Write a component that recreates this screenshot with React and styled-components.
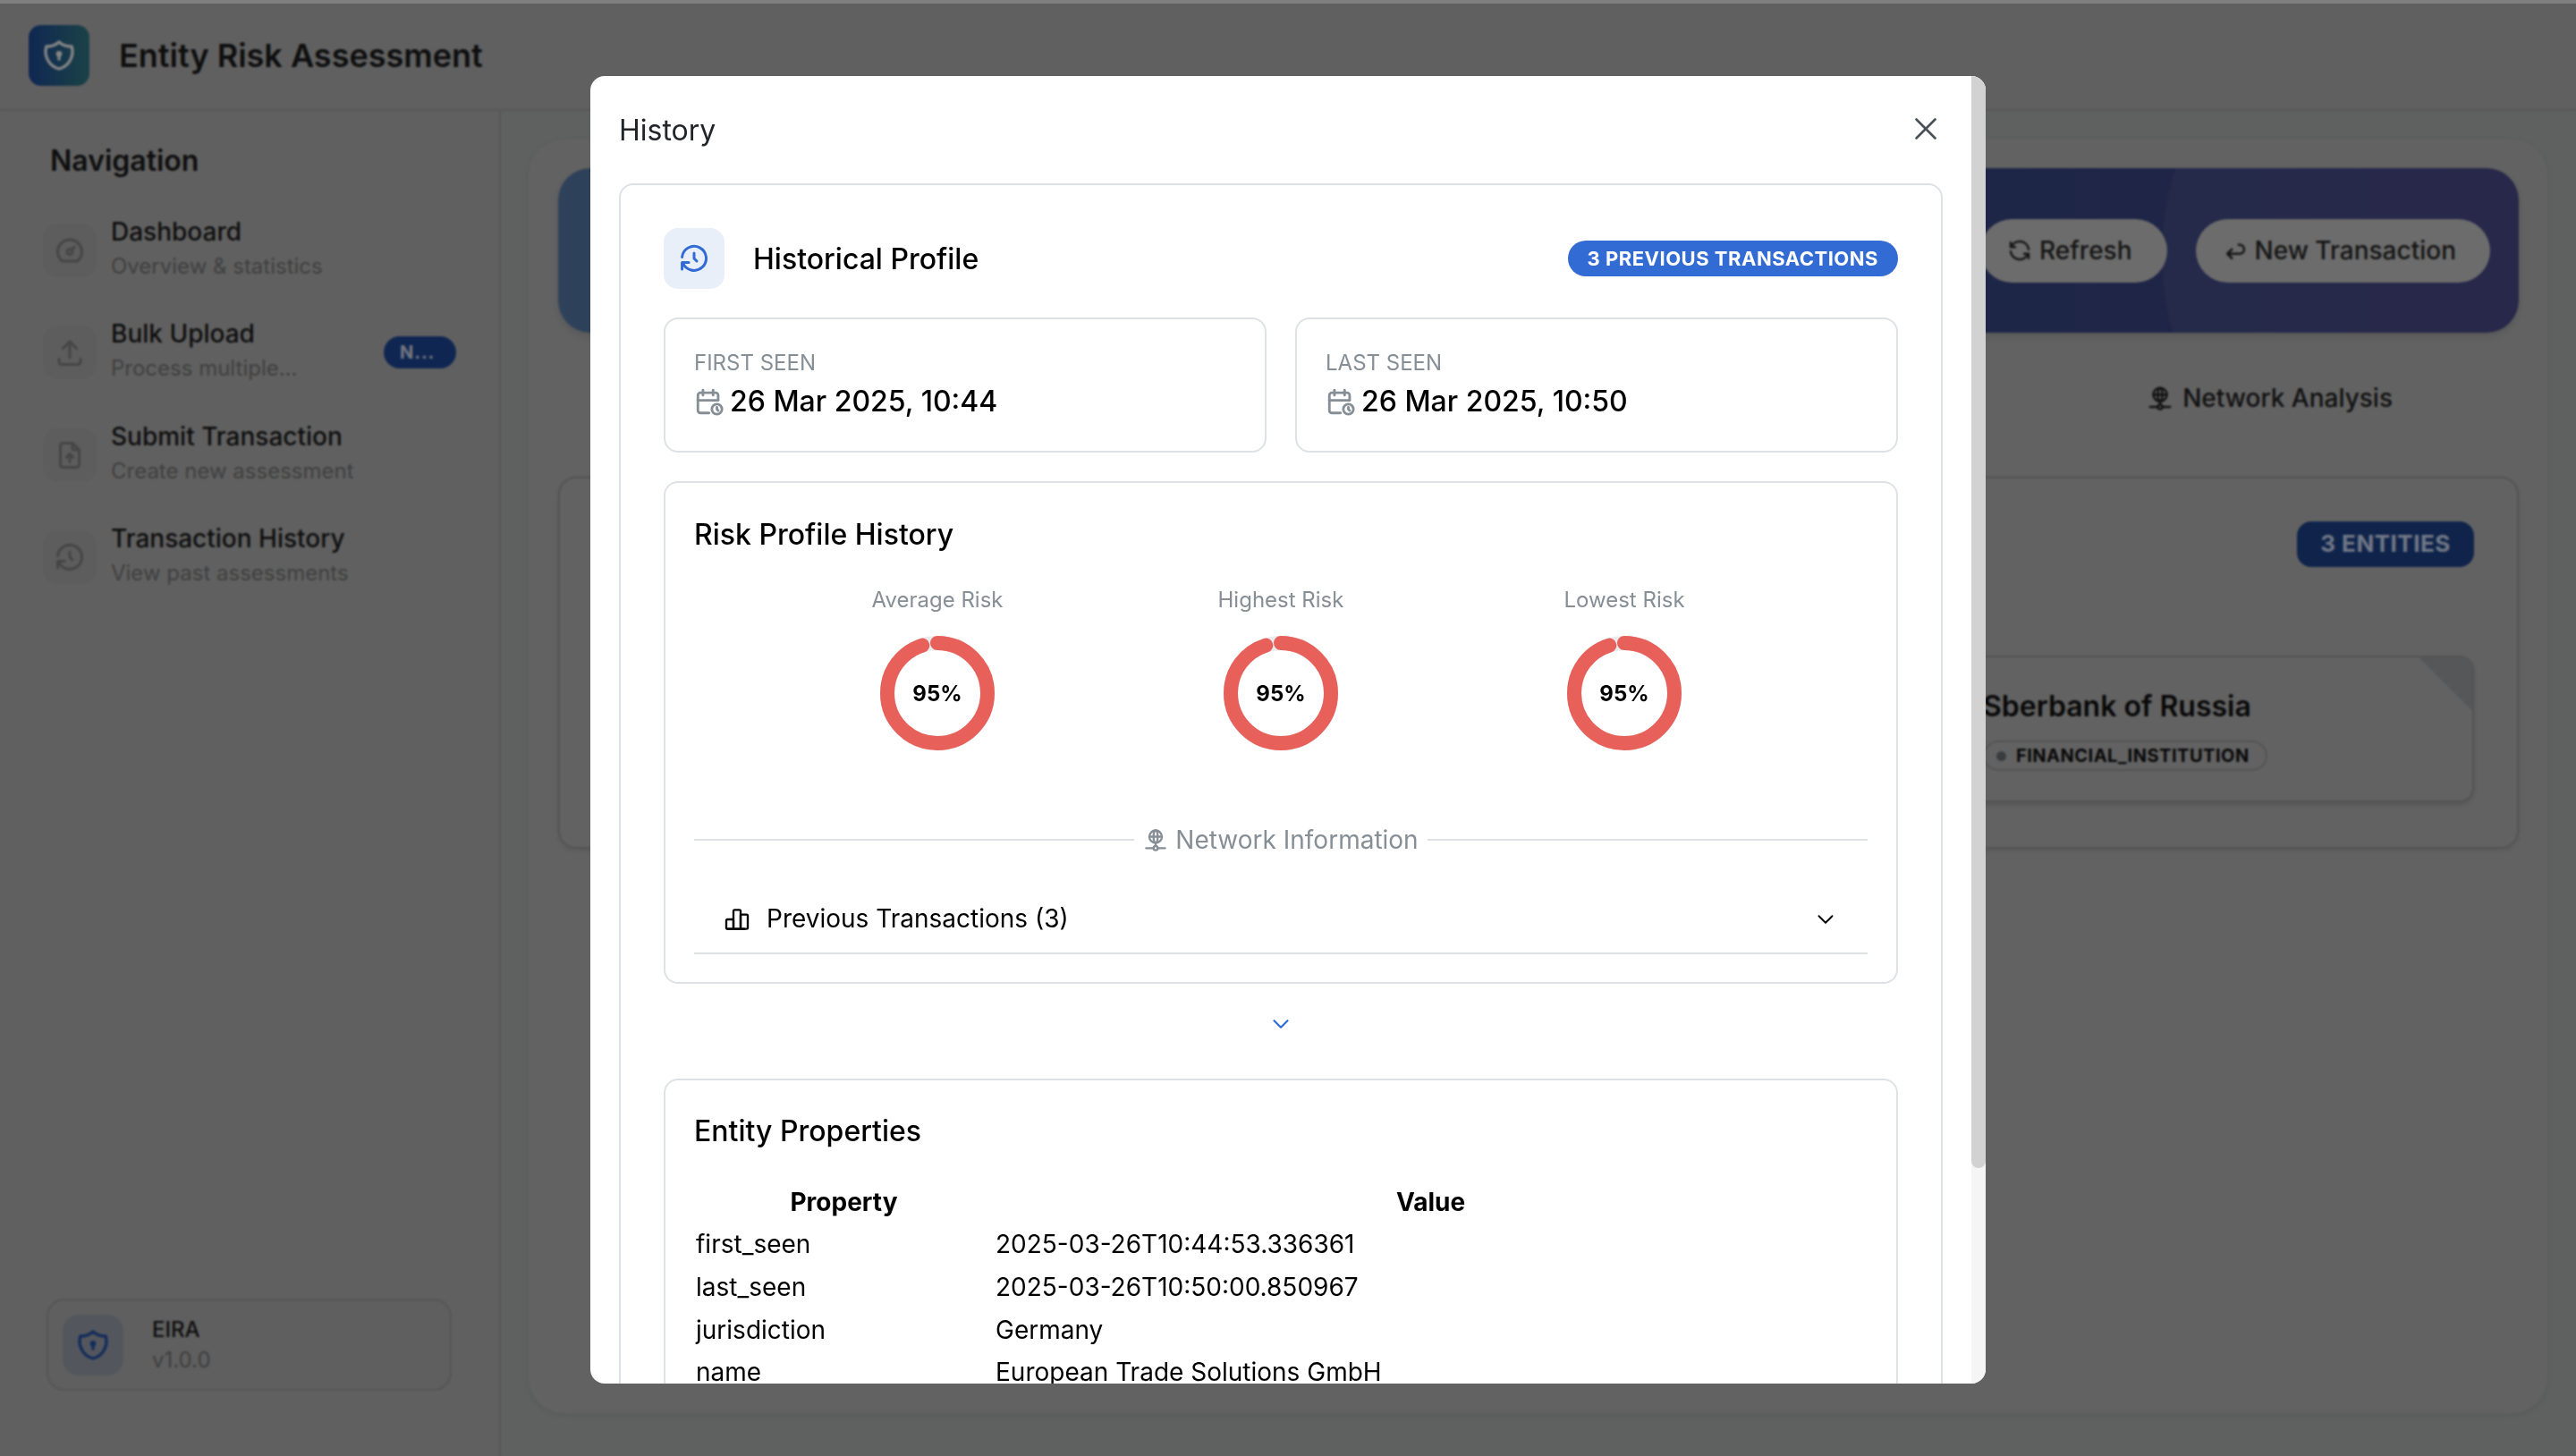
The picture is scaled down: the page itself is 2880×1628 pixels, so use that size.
import React from 'react';
import styled, { createGlobalStyle } from 'styled-components';
import {
  TbDashboard, TbUpload, TbFileUpload, TbHistory, TbShieldLock, TbCalendarTime,
  TbRefresh, TbArrowBack, TbNetwork, TbChartBar, TbChevronDown, TbX,
} from 'react-icons/tb';

const Global = createGlobalStyle`
  html, body { margin: 0; padding: 0; background: #b9b9b9; }
  * { box-sizing: border-box; }
  body { font-family: Inter, "Liberation Sans", sans-serif; color: #000; }
`;

const Page = styled.div`
  position: relative;
  width: 2880px;
  height: 1628px;
  overflow: hidden;
  display: flex;
  flex-direction: column;
  background: #b9b9b9;
  border-top: 4px solid #7f7f7f;
`;

const Header = styled.header`
  height: 120px;
  flex: none;
  display: flex;
  align-items: center;
  gap: 33px;
  padding: 0 32px 2px;
  border-bottom: 2px solid #a7a7a7;
`;

const Logo = styled.div`
  width: 68px;
  height: 68px;
  border-radius: 14px;
  display: flex;
  align-items: center;
  justify-content: center;
  color: #fff;
  background: linear-gradient(90deg, #1f4c9e, #347f88);
`;

const AppTitle = styled.h1`
  margin: 0;
  font-size: 36px;
  font-weight: 600;
  color: #1c1c1c;
`;

const Body = styled.div`
  flex: 1;
  display: flex;
  min-height: 0;
`;

const Sidebar = styled.aside`
  width: 560px;
  flex: none;
  display: flex;
  flex-direction: column;
  padding: 32px 48px 73px;
  border-right: 2px solid #a7a7a7;
`;

const NavHeading = styled.h2`
  margin: 0 0 46px 8px;
  font-size: 32px;
  line-height: 48px;
  font-weight: 600;
  color: #1c1c1c;
`;

const NavList = styled.nav`
  display: flex;
  flex-direction: column;
  gap: 54.3px;
  width: 462px;
`;

const NavItem = styled.div`
  display: flex;
  align-items: center;
  gap: 16px;
  height: 60px;
`;

const NavIcon = styled.div`
  width: 60px;
  height: 60px;
  flex: none;
  border-radius: 16px;
  background: #b2b2b2;
  color: #858585;
  display: flex;
  align-items: center;
  justify-content: center;
`;

const NavText = styled.div`
  display: flex;
  flex-direction: column;
  gap: 2px;
  min-width: 0;
  padding-bottom: 4px;
`;

const NavTitle = styled.span`
  font-size: 28px;
  line-height: 38px;
  font-weight: 500;
  color: #1c1c1c;
`;

const NavSub = styled.span`
  font-size: 24px;
  line-height: 36px;
  color: #7a7a7a;
`;

const NavBadge = styled.span`
  margin-left: auto;
  width: 81px;
  height: 36px;
  flex: none;
  border-radius: 18px;
  background: #204a9e;
  color: #dfe6f5;
  font-size: 20px;
  font-weight: 700;
  letter-spacing: 1px;
  line-height: 36px;
  padding-left: 18px;
`;

const SideFooter = styled.div`
  margin: auto 0 0 4px;
  width: 453px;
  height: 103px;
  display: flex;
  align-items: center;
  gap: 32px;
  padding-left: 16px;
  border: 2px solid #a3a3a3;
  border-radius: 20px;
  background: #b6b6b6;
`;

const FooterIcon = styled.div`
  width: 68px;
  height: 68px;
  border-radius: 18px;
  background: #a0a7b2;
  color: #2552ad;
  display: flex;
  align-items: center;
  justify-content: center;
`;

const FooterText = styled.div`
  display: flex;
  flex-direction: column;
  gap: 2px;
`;

const FooterName = styled.span`
  font-size: 24px;
  line-height: 32px;
  font-weight: 500;
  color: #1c1c1c;
`;

const FooterVersion = styled.span`
  font-size: 24px;
  line-height: 32px;
  color: #7a7a7a;
`;

const Main = styled.main`
  flex: 1;
  min-width: 0;
  padding: 32px 32px 48px 31px;
  background: #b6bbb9;
`;

const Panel = styled.div`
  height: 100%;
  padding: 32px 32px 0 33px;
  border-radius: 40px;
  background: #bdbdbd;
  box-shadow: 0 2px 8px rgba(0, 0, 0, 0.08);
`;

const Banner = styled.section`
  position: relative;
  height: 184px;
  display: flex;
  align-items: center;
  justify-content: flex-end;
  gap: 32px;
  padding-right: 32px;
  border-radius: 36px;
  overflow: hidden;
  background: linear-gradient(90deg, #5a7fae 0%, #3a4a88 73%, #45448a 100%);
  box-shadow: 0 4px 10px rgba(0, 0, 0, 0.12);
`;

const BannerCircle = styled.div`
  position: absolute;
  right: -219px;
  top: -212px;
  width: 618px;
  height: 618px;
  border-radius: 50%;
  background: rgba(255, 255, 255, 0.05);
`;

const BannerButton = styled.button`
  position: relative;
  height: 71px;
  display: flex;
  align-items: center;
  gap: 7px;
  padding: 0 ${(p) => p.$pad}px 0 29px;
  border: 0;
  border-radius: 36px;
  background: #cfcfcf;
  color: #2a2a2a;
  font: 500 28px Inter, sans-serif;
`;

const TabRow = styled.div`
  height: 81px;
  margin: 32px 0 48px;
  display: flex;
  justify-content: flex-end;
  align-items: center;
  padding-right: 141px;
`;

const Tab = styled.div`
  display: flex;
  align-items: center;
  gap: 10px;
  font-size: 28px;
  font-weight: 500;
  color: #222;
`;

const EntitiesCard = styled.section`
  height: 416px;
  padding: 48px 48px 0;
  border: 2px solid #a0a0a0;
  border-radius: 20px;
  box-shadow: 0 2px 6px rgba(0, 0, 0, 0.1);
`;

const EntitiesTop = styled.div`
  display: flex;
  justify-content: flex-end;
  margin-bottom: 99px;
`;

const EntitiesBadge = styled.span`
  width: 198px;
  height: 51px;
  border-radius: 16px;
  background: #1f4590;
  color: #d8e4ff;
  font-size: 26px;
  font-weight: 700;
  letter-spacing: 0.5px;
  line-height: 50px;
  text-align: center;
`;

const TileRow = styled.div`
  display: flex;
  justify-content: flex-end;
`;

const Tile = styled.article`
  position: relative;
  width: 675px;
  height: 164px;
  padding: 33px 0 0 124px;
  border: 2px solid #a0a0a0;
  border-radius: 16px;
  overflow: hidden;
  box-shadow: 0 3px 5px rgba(0, 0, 0, 0.14);
`;

const TileCorner = styled.div`
  position: absolute;
  top: 0;
  right: 0;
  width: 60px;
  height: 60px;
  background: #a4a7ab;
  clip-path: polygon(0 0, 100% 0, 100% 100%);
`;

const TileName = styled.h3`
  margin: 0 0 16px;
  font-size: 32px;
  line-height: 44px;
  font-weight: 600;
  color: #111;
`;

const Pill = styled.span`
  display: inline-flex;
  align-items: center;
  gap: 11px;
  height: 34px;
  padding: 0 18px 0 13px;
  border: 2px solid #a0a0a0;
  border-radius: 17px;
  font-size: 20px;
  letter-spacing: 0.5px;
  font-weight: 700;
  color: #111;
`;

const PillDot = styled.i`
  width: 11px;
  height: 11px;
  border-radius: 50%;
  background: #6f7479;
`;

const Overlay = styled.div`
  position: absolute;
  inset: -4px 0 0 0;
  display: flex;
  justify-content: center;
  align-items: flex-start;
  padding-top: 85px;
  background: rgba(0, 0, 0, 0.48);
  backdrop-filter: blur(1px);
`;

const Modal = styled.div`
  position: relative;
  width: 1560px;
  height: 1462px;
  padding-right: 16px;
  border-radius: 16px;
  background: #fff;
  overflow: hidden;
`;

const ScrollTrack = styled.div`
  position: absolute;
  top: 0;
  right: 0;
  bottom: 0;
  width: 16px;
  background: #f5f5f5;
`;

const ScrollThumb = styled.div`
  height: 1221px;
  border-radius: 0 0 8px 8px;
  background: #d2d2d2;
`;

const ModalHead = styled.div`
  height: 120px;
  display: flex;
  align-items: center;
  justify-content: space-between;
  padding: 0 30px 0 32px;
  color: #000;
`;

const ModalTitle = styled.h2`
  margin: 0;
  font-size: 32px;
  font-weight: 400;
  color: #212529;
`;

const CloseButton = styled.span`
  display: flex;
  color: #495057;
  margin-top: -2px;
`;

const ModalBody = styled.div`
  padding: 0 32px;
`;

const OuterCard = styled.div`
  padding: 48px 48px;
  border: 2px solid #dee2e6;
  border-radius: 16px;
`;

const ProfileHead = styled.div`
  display: flex;
  align-items: center;
  justify-content: space-between;
  height: 68px;
  margin-bottom: 32px;
`;

const ProfileTitleGroup = styled.div`
  display: flex;
  align-items: center;
  gap: 32px;
`;

const ProfileIcon = styled.div`
  width: 68px;
  height: 68px;
  border-radius: 16px;
  background: #e8eff9;
  color: #326bd4;
  display: flex;
  align-items: center;
  justify-content: center;
`;

const ProfileTitle = styled.h3`
  margin: 0;
  font-size: 32px;
  font-weight: 500;
`;

const CountBadge = styled.span`
  height: 40px;
  padding: 0 22px;
  border-radius: 20px;
  background: #326bd4;
  color: #fff;
  font-size: 22px;
  font-weight: 700;
  line-height: 40px;
  letter-spacing: 0.5px;
`;

const StatGrid = styled.div`
  display: grid;
  grid-template-columns: 1fr 1fr;
  gap: 32px;
  margin-bottom: 32px;
`;

const BorderCard = styled.div`
  border: 2px solid #dee2e6;
  border-radius: 16px;
`;

const StatCard = styled(BorderCard)`
  height: 151px;
  padding: 31px 32px;
`;

const StatLabel = styled.div`
  font-size: 24px;
  line-height: 36px;
  color: #868e96;
  margin-bottom: 2px;
`;

const StatValue = styled.div`
  display: flex;
  align-items: center;
  gap: 6px;
  font-size: 32px;
  line-height: 46px;
  font-weight: 500;
  svg {
    color: #868e96;
  }
`;

const RiskCard = styled(BorderCard)`
  height: 562px;
  padding: 35px 32px 0;
`;

const CardHeading = styled.h3`
  margin: 0;
  font-size: 32px;
  line-height: 46px;
  font-weight: 500;
`;

const RingGrid = styled.div`
  display: grid;
  grid-template-columns: repeat(3, 384px);
  justify-content: center;
  margin-top: 30px;
`;

const RingCol = styled.div`
  display: flex;
  flex-direction: column;
  align-items: center;
`;

const RingLabel = styled.div`
  font-size: 24px;
  line-height: 40px;
  color: #868e96;
  margin-bottom: 20px;
`;

const RingBox = styled.div`
  display: grid;
  width: 128px;
  height: 128px;
  place-items: center;
  > * {
    grid-area: 1 / 1;
  }
`;

const RingValue = styled.span`
  font-size: 24px;
  font-weight: 700;
`;

const Divider = styled.div`
  display: flex;
  align-items: center;
  gap: 10px;
  margin-top: 78px;
  height: 44px;
  font-size: 28px;
  color: #868e96;
  &::before,
  &::after {
    content: '';
    flex: 1;
    height: 2px;
    background: #dee2e6;
  }
`;

const DividerLabel = styled.span`
  display: flex;
  align-items: center;
  gap: 8px;
`;

const Accordion = styled.div`
  height: 106px;
  display: flex;
  align-items: center;
  justify-content: space-between;
  padding: 28px 32px 0 32px;
  border-bottom: 2px solid #dee2e6;
  font-size: 28px;
  svg:last-child {
    margin-top: 2px;
  }
`;

const AccordionLabel = styled.span`
  display: flex;
  align-items: center;
  gap: 17px;
`;

const Chevron = styled.div`
  display: flex;
  justify-content: center;
  align-items: center;
  height: 106px;
  padding-bottom: 16px;
  color: #326bd4;
`;

const PropsCard = styled(BorderCard)`
  padding: 34px 32px 32px;
`;

const PropTable = styled.table`
  width: 100%;
  margin-top: 32px;
  border-collapse: collapse;
  font-size: 28px;
  table-layout: fixed;
  th {
    font-weight: 700;
    height: 47.6px;
    text-align: center;
    padding: 0;
  }
  td {
    height: 47.6px;
    padding: 0 2px;
  }
  th:first-child {
    width: 335px;
  }
`;

const IS = 36;

const Ring = () => (
  <RingBox>
    <svg width="128" height="128" viewBox="0 0 128 128">
      <circle cx="64" cy="64" r="56" fill="none" stroke="#e9ecef" strokeWidth="16" />
      <circle
        cx="64" cy="64" r="56" fill="none" stroke="#e8605a" strokeWidth="16"
        strokeLinecap="round" strokeDasharray="334.3 351.9" transform="rotate(-90 64 64)"
      />
    </svg>
    <RingValue>95%</RingValue>
  </RingBox>
);

const nav = [
  { I: TbDashboard, t: 'Dashboard', s: 'Overview & statistics' },
  { I: TbUpload, t: 'Bulk Upload', s: 'Process multiple...', badge: 'N...' },
  { I: TbFileUpload, t: 'Submit Transaction', s: 'Create new assessment' },
  { I: TbHistory, t: 'Transaction History', s: 'View past assessments' },
];

const rows = [
  ['first_seen', '2025-03-26T10:44:53.336361'],
  ['last_seen', '2025-03-26T10:50:00.850967'],
  ['jurisdiction', 'Germany'],
  ['name', 'European Trade Solutions GmbH'],
];

export default function App() {
  return (
    <Page>
      <Global />
      <Header>
        <Logo><TbShieldLock size={40} /></Logo>
        <AppTitle>Entity Risk Assessment</AppTitle>
      </Header>
      <Body>
        <Sidebar>
          <NavHeading>Navigation</NavHeading>
          <NavList>
            {nav.map(({ I, t, s, badge }) => (
              <NavItem key={t}>
                <NavIcon><I size={IS} /></NavIcon>
                <NavText>
                  <NavTitle>{t}</NavTitle>
                  <NavSub>{s}</NavSub>
                </NavText>
                {badge && <NavBadge>{badge}</NavBadge>}
              </NavItem>
            ))}
          </NavList>
          <SideFooter>
            <FooterIcon><TbShieldLock size={40} /></FooterIcon>
            <FooterText>
              <FooterName>EIRA</FooterName>
              <FooterVersion>v1.0.0</FooterVersion>
            </FooterText>
          </SideFooter>
        </Sidebar>
        <Main>
          <Panel>
            <Banner>
              <BannerCircle />
              <BannerButton $pad={39}><TbRefresh size={30} />Refresh</BannerButton>
              <BannerButton $pad={38}><TbArrowBack size={30} />New Transaction</BannerButton>
            </Banner>
            <TabRow>
              <Tab><TbNetwork size={30} />Network Analysis</Tab>
            </TabRow>
            <EntitiesCard>
              <EntitiesTop><EntitiesBadge>3 ENTITIES</EntitiesBadge></EntitiesTop>
              <TileRow>
                <Tile>
                  <TileCorner />
                  <TileName>Sberbank of Russia</TileName>
                  <Pill><PillDot />FINANCIAL_INSTITUTION</Pill>
                </Tile>
              </TileRow>
            </EntitiesCard>
          </Panel>
        </Main>
      </Body>
      <Overlay>
        <Modal>
          <ModalHead>
            <ModalTitle>History</ModalTitle>
            <CloseButton><TbX size={42} strokeWidth={1.5} /></CloseButton>
          </ModalHead>
          <ModalBody>
            <OuterCard>
              <ProfileHead>
                <ProfileTitleGroup>
                  <ProfileIcon><TbHistory size={36} /></ProfileIcon>
                  <ProfileTitle>Historical Profile</ProfileTitle>
                </ProfileTitleGroup>
                <CountBadge>3 PREVIOUS TRANSACTIONS</CountBadge>
              </ProfileHead>
              <StatGrid>
                <StatCard>
                  <StatLabel>FIRST SEEN</StatLabel>
                  <StatValue><TbCalendarTime size={34} />26 Mar 2025, 10:44</StatValue>
                </StatCard>
                <StatCard>
                  <StatLabel>LAST SEEN</StatLabel>
                  <StatValue><TbCalendarTime size={34} />26 Mar 2025, 10:50</StatValue>
                </StatCard>
              </StatGrid>
              <RiskCard>
                <CardHeading>Risk Profile History</CardHeading>
                <RingGrid>
                  {['Average Risk', 'Highest Risk', 'Lowest Risk'].map((l) => (
                    <RingCol key={l}>
                      <RingLabel>{l}</RingLabel>
                      <Ring />
                    </RingCol>
                  ))}
                </RingGrid>
                <Divider>
                  <DividerLabel><TbNetwork size={28} />Network Information</DividerLabel>
                </Divider>
                <Accordion>
                  <AccordionLabel><TbChartBar size={32} strokeWidth={1.75} />Previous Transactions (3)</AccordionLabel>
                  <TbChevronDown size={30} strokeWidth={1.5} />
                </Accordion>
              </RiskCard>
              <Chevron><TbChevronDown size={30} strokeWidth={1.75} /></Chevron>
              <PropsCard>
                <CardHeading>Entity Properties</CardHeading>
                <PropTable>
                  <thead>
                    <tr><th>Property</th><th>Value</th></tr>
                  </thead>
                  <tbody>
                    {rows.map(([k, v]) => (
                      <tr key={k}><td>{k}</td><td>{v}</td></tr>
                    ))}
                  </tbody>
                </PropTable>
              </PropsCard>
            </OuterCard>
          </ModalBody>
          <ScrollTrack><ScrollThumb /></ScrollTrack>
        </Modal>
      </Overlay>
    </Page>
  );
}
